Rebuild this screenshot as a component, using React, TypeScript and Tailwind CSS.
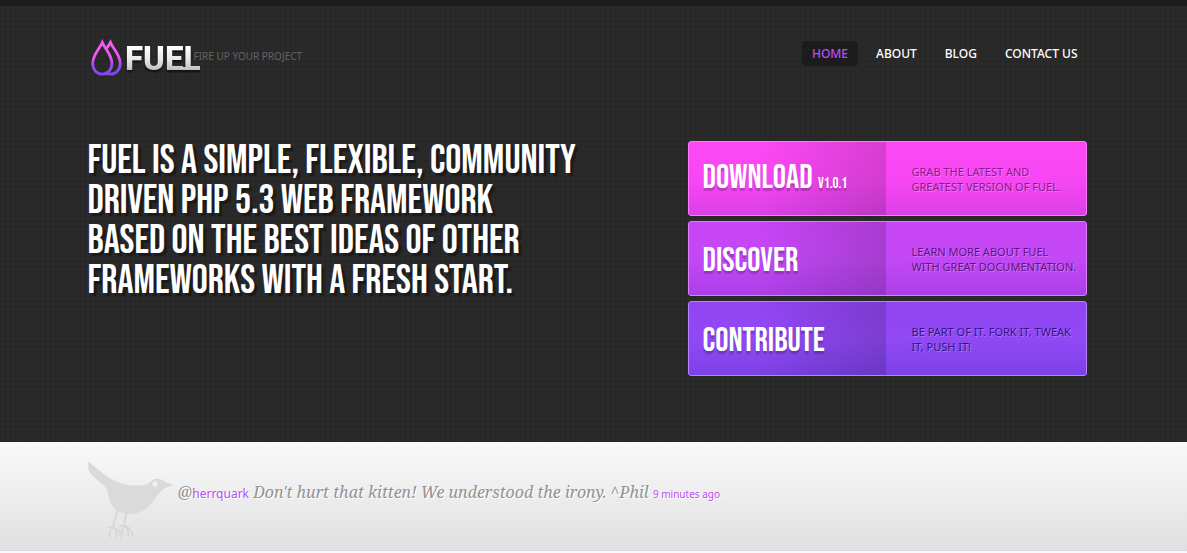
const navItems = [
  { label: "Home", href: "#home", active: true },
  { label: "About", href: "#about", active: false },
  { label: "Blog", href: "#blog", active: false },
  { label: "Contact Us", href: "#contact", active: false },
];

const actions = [
  {
    title: "Download",
    version: "v1.0.1",
    href: "#download",
    lines: ["Grab the latest and", "greatest version of Fuel."],
    card: "border-[#ff79ff] bg-linear-to-b from-[#fe48f6] via-[#f747f4] to-[#dd40e8]",
    text: "text-[#8b1b8a]",
  },
  {
    title: "Discover",
    version: "",
    href: "#discover",
    lines: ["Learn more about Fuel", "with great documentation."],
    card: "border-[#df7dff] bg-linear-to-b from-[#c844f5] via-[#c348f5] to-[#ad3fe8]",
    text: "text-[#5c1580]",
  },
  {
    title: "Contribute",
    version: "",
    href: "#contribute",
    lines: ["Be part of it. Fork it, tweak", "it, push it!"],
    card: "border-[#b583ff] bg-linear-to-b from-[#9344f3] via-[#9149f5] to-[#7c41e6]",
    text: "text-[#32147f]",
  },
];

function Logo() {
  return (
    <svg width="112" height="44" viewBox="0 0 112 44" role="img" aria-label="Fuel">
      <defs>
        <linearGradient id="drop" gradientUnits="userSpaceOnUse" x1="0" y1="4" x2="0" y2="40">
          <stop offset="0" stopColor="#ff5df3" />
          <stop offset="0.5" stopColor="#e355f0" />
          <stop offset="0.75" stopColor="#9249f2" />
          <stop offset="1" stopColor="#7a45ee" />
        </linearGradient>
        <linearGradient id="word" gradientUnits="userSpaceOnUse" x1="0" y1="11" x2="0" y2="35">
          <stop offset="0" stopColor="#ffffff" />
          <stop offset="0.5" stopColor="#e9e9e9" />
          <stop offset="1" stopColor="#bcbcbc" />
        </linearGradient>
      </defs>
      <g fill="none" stroke="url(#drop)" strokeWidth="2.8">
        <path d="M14.3 6.5C11.5 13 4.7 18.500 4.700 27.500C4.700 34 9 38.200 14.300 38.200C19.600 38.200 23.900 34 23.900 27.500C23.900 18.500 17.100 13 14.300 6.500Z" />
        <path d="M18.500 12.500C20.500 9.800 21.700 8 22.500 6.500C25 13 32.200 18.500 32.200 27.500C32.200 34 27.800 38.200 22.500 38.200C20 38.200 18 37.600 16.500 36.600" />
      </g>
      <g fill="url(#word)" className="drop-shadow-[0_2px_1px_rgba(0,0,0,0.6)]">
        <text x="37" y="34" fontFamily="Roboto, sans-serif" fontWeight="800" fontSize="33">FUEL</text>
        <rect x="80" y="31" width="31" height="3" />
      </g>
    </svg>
  );
}

function Bird() {
  return (
    <svg width="88" height="80" viewBox="0 0 88 80" aria-hidden="true" className="shrink-0">
      <path
        fill="#dadadb"
        fillRule="evenodd"
        d="M0.500 0.500C7 6 14 12 20 16C29 21.500 37 24.500 47 24.800C55 25 60 23.500 63 20.500C65 18 69 17 72.500 18.500C75 19.500 77 21 79 21.800L85.500 24L78 26.500C74 28.500 71 32 67.500 37C61 46.500 54 52.500 43 53C33 53.300 25.500 49 22 41C20.500 36.500 20.500 30 17.500 26.500C13 20.500 3 15.500 1 10C0 7 0 4 0.500 0.500ZM67 20.300A2.700 2.700 0 1 0 67 25.700A2.700 2.700 0 1 0 67 20.300Z"
      />
      <g fill="none" stroke="#d6d6d7" strokeWidth="1.500" strokeLinecap="round">
        <path d="M29.500 49L25 66M38.500 52L35.500 65" strokeWidth="1.800" />
        <path d="M20 66.500C24 64.800 28 66 29.500 69C31 71 31.500 74 33 76M25 66.500C29 67.500 33 69.500 34 73.500M25.500 66.500C22 69 21 73 22 76.500M27 67C28.500 71 29 74 27.500 78" />
        <path d="M31.500 65C36 63.500 40 65 41.500 68C43.500 70 44.500 72 45 74.500M36 65C39.500 67 41 70 40.500 75.500M36 65.500C33.500 68 33.500 70 35 72.500" />
      </g>
    </svg>
  );
}

export default function App() {
  return (
    <div className="min-h-screen bg-[#f9f9fb] font-['Noto_Sans',sans-serif]">
      <header className="border-t-6 border-[#1d1d1d] bg-[#2a2a2a] bg-[linear-gradient(to_right,rgba(0,0,0,0.07)_1px,transparent_1px),linear-gradient(to_bottom,rgba(0,0,0,0.07)_1px,transparent_1px)] bg-size-[5px_5px] pr-3 pb-[66px]">
        <div className="mx-auto max-w-[1000px]">
          <div className="flex items-start justify-between pt-[30px]">
            <a href="#home" className="flex items-center uppercase">
              <Logo />
              <span className="-ml-[6px] pb-[3px] text-[10px] text-[#636363]">Fire up your project</span>
            </a>
            <nav className="flex gap-2 pt-[5px]" aria-label="Main">
              {navItems.map((item) => (
                <a
                  key={item.label}
                  href={item.href}
                  aria-current={item.active ? "page" : undefined}
                  className={
                    item.active
                      ? "rounded-sm bg-[#1c1c1c] px-[10px] text-xs leading-[25px] font-medium text-[#b94df5] uppercase"
                      : "rounded-sm px-[10px] text-xs leading-[25px] font-medium text-white uppercase"
                  }
                >
                  {item.label}
                </a>
              ))}
            </nav>
          </div>
          <div className="flex items-start justify-between pt-[61px]">
            <h1 className="font-['Bebas_Neue',sans-serif] text-[40px] leading-10 text-white uppercase text-shadow-[3px_3px_1px_rgba(0,0,0,0.35)]">
              Fuel is a simple, flexible, community
              <br />
              driven PHP 5.3 web framework
              <br />
              based on the best ideas of other
              <br />
              frameworks with a fresh start.
            </h1>
            <ul className="flex w-2/5 flex-col gap-[5px] pr-px">
              {actions.map((action) => (
                <li key={action.title}>
                  <a href={action.href} className={`flex h-[75px] overflow-hidden rounded-[3px] border uppercase ${action.card}`}>
                    <span className="flex w-[197px] items-center bg-linear-to-r from-transparent from-35% to-black/15 pt-1 pl-[14px]">
                      <span className="font-['Bebas_Neue',sans-serif] text-[33px] leading-8 text-white text-shadow-[0_3px_1px_rgba(0,0,0,0.2)]">
                        {action.title}
                        {action.version && <small className="ml-[3px] text-[15px]"> {action.version}</small>}
                      </span>
                    </span>
                    <span className={`flex flex-1 flex-col justify-center pl-[26px] text-[11px] leading-[15px] whitespace-nowrap text-shadow-[1px_1px_0_rgba(255,255,255,0.25)] ${action.text}`}>
                      {action.lines.map((line) => (
                        <span key={line}>{line}</span>
                      ))}
                    </span>
                  </a>
                </li>
              ))}
            </ul>
          </div>
        </div>
      </header>
      <section className="border-b border-[#d9d9dc] bg-linear-to-b from-[#fafafa] to-[#e0e0e2] pr-3" aria-label="Latest tweet">
        <div className="mx-auto flex max-w-[1000px] items-start gap-[2px] pt-[19px] pb-[9px]">
          <Bird />
          <p className="pt-[19px] font-['Noto_Serif',serif] text-base text-[#929292] italic text-shadow-[1px_1px_0_#ffffff]">
            @
            <a href="#herrquark" className="font-['Noto_Sans',sans-serif] text-xs text-[#b94df5] not-italic">
              herrquark
            </a>{" "}
            Don't hurt that kitten! We understood the irony. ^Phil{" "}
            <a href="#status" className="font-['Noto_Sans',sans-serif] text-[10px] text-[#b94df5] not-italic">
              9 minutes ago
            </a>
          </p>
        </div>
      </section>
    </div>
  );
}
